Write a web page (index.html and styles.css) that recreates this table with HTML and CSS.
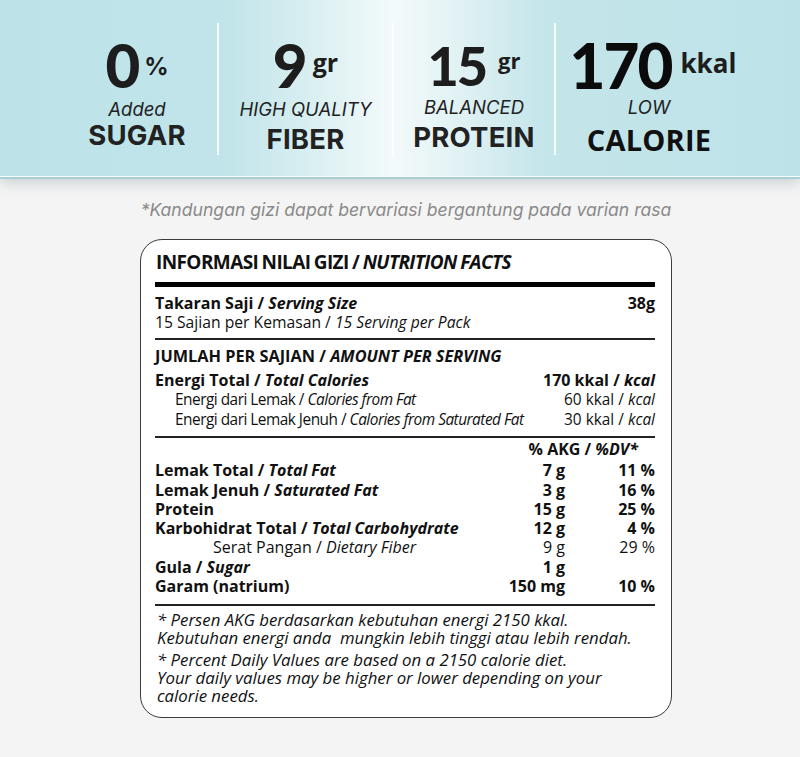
FILE: index.html
```html
<!DOCTYPE html>
<html lang="id">
<head>
<meta charset="utf-8">
<title>Nutrition Facts</title>
<link rel="stylesheet" href="styles.css">
</head>
<body>
<header class="stats">
  <div class="stat stat-1">
    <div class="stat-head"><span class="num">0</span><span class="unit unit-pct">%</span></div>
    <div class="stat-sub">Added</div>
    <div class="stat-main">SUGAR</div>
  </div>
  <div class="stat stat-2">
    <div class="stat-head"><span class="num">9</span><span class="unit">gr</span></div>
    <div class="stat-sub">HIGH QUALITY</div>
    <div class="stat-main">FIBER</div>
  </div>
  <div class="stat stat-3">
    <div class="stat-head"><span class="num">15</span><span class="unit">gr</span></div>
    <div class="stat-sub">BALANCED</div>
    <div class="stat-main">PROTEIN</div>
  </div>
  <div class="stat stat-4">
    <div class="stat-head"><span class="num">170</span><span class="unit unit-kkal">kkal</span></div>
    <div class="stat-sub">LOW</div>
    <div class="stat-main">CALORIE</div>
  </div>
</header>

<p class="note">*Kandungan gizi dapat bervariasi bergantung pada varian rasa</p>

<section class="card">
  <h1 class="title">INFORMASI NILAI GIZI / <i>NUTRITION FACTS</i></h1>
  <div class="rule-thick"></div>

  <div class="row bold"><span>Takaran Saji / <i>Serving Size</i></span><span>38g</span></div>
  <div class="row serv"><span>15 Sajian per Kemasan / <i>15 Serving per Pack</i></span></div>
  <div class="rule"></div>

  <div class="row bold section-head"><span>JUMLAH PER SAJIAN / <i>AMOUNT PER SERVING</i></span></div>
  <div class="row bold energy"><span>Energi Total / <i>Total Calories</i></span><span>170 kkal / <i>kcal</i></span></div>
  <div class="row sub"><span class="cond">Energi dari Lemak / <i>Calories from Fat</i></span><span>60 kkal / <i>kcal</i></span></div>
  <div class="row sub"><span class="cond">Energi dari Lemak Jenuh / <i>Calories from Saturated Fat</i></span><span>30 kkal / <i>kcal</i></span></div>
  <div class="rule"></div>

  <div class="nutrients">
    <div class="nrow bold akg"><span></span><span class="dv">% AKG / <i>%DV*</i></span></div>
    <div class="nrow bold"><span>Lemak Total / <i>Total Fat</i></span><span class="amt">7 g</span><span class="pct">11 %</span></div>
    <div class="nrow bold"><span>Lemak Jenuh / <i>Saturated Fat</i></span><span class="amt">3 g</span><span class="pct">16 %</span></div>
    <div class="nrow bold"><span>Protein</span><span class="amt">15 g</span><span class="pct">25 %</span></div>
    <div class="nrow bold"><span>Karbohidrat Total / <i>Total Carbohydrate</i></span><span class="amt">12 g</span><span class="pct">4 %</span></div>
    <div class="nrow fiber"><span>Serat Pangan / <i>Dietary Fiber</i></span><span class="amt">9 g</span><span class="pct">29 %</span></div>
    <div class="nrow bold"><span>Gula / <i>Sugar</i></span><span class="amt">1 g</span><span class="pct"></span></div>
    <div class="nrow bold"><span>Garam (natrium)</span><span class="amt">150 mg</span><span class="pct">10 %</span></div>
  </div>
  <div class="rule"></div>

  <div class="foot">
    <p>* Persen AKG berdasarkan kebutuhan energi 2150 kkal.<br>Kebutuhan energi anda&nbsp; mungkin lebih tinggi atau lebih rendah.</p>
    <p>* Percent Daily Values are based on a 2150 calorie diet.<br>Your daily values may be higher or lower depending on your<br>calorie needs.</p>
  </div>
</section>
</body>
</html>
```

FILE: styles.css
```css
html, body {
  margin: 0;
  padding: 0;
}
body {
  width: 800px;
  height: 757px;
  overflow: hidden;
  background: #f4f4f4;
  color: #111;
  font-family: "Open Sans", "Liberation Sans", sans-serif;
}

/* ---------- top banner ---------- */
.stats {
  position: relative;
  height: 177px;
  box-sizing: border-box;
  padding-left: 57px;
  display: grid;
  grid-template-columns: 160px 175px 162px 196px;
  background: linear-gradient(90deg, #bde3e8 0%, #c0e4e9 28%, #dcf0f2 40%, #f3fafb 49%, #e2f2f4 57%, #c4e5ea 68%, #bde3e8 100%);
  border-bottom: 1px solid #f6fbfc;
  box-shadow: 0 2px 0 #a9cfd4, 0 6px 12px rgba(120, 150, 155, 0.35);
  color: #1d1d1d;
}
.stat {
  margin-top: 23px;
  height: 132px;
  display: flex;
  flex-direction: column;
  align-items: center;
  font-family: Inter, "Open Sans", sans-serif;
}
.stat + .stat {
  border-left: 2px solid rgba(255, 255, 255, 0.85);
}
.stat-3 { border-left-color: rgba(255, 255, 255, 0.5); }

.stat-head {
  display: flex;
  align-items: flex-start;
  height: 70px;
  margin-top: 12px;
}
.num {
  font-family: Lato, "Open Sans", sans-serif;
  font-weight: 900;
  font-size: 60px;
  line-height: 60px;
  letter-spacing: -1px;
}
.unit {
  font-family: "Open Sans", sans-serif;
  font-weight: 700;
  font-size: 25px;
  line-height: 25px;
  margin-left: 6px;
  margin-top: 15px;
}
.unit-pct {
  font-family: Inter, sans-serif;
  font-size: 24px;
  margin-left: 5px;
  margin-top: 19px;
}
.stat-4 .num { font-size: 62px; color: #0b0b0b; letter-spacing: -2px; }
.unit-kkal { font-size: 26px; margin-top: 16px; margin-left: 9px; }
.stat-3 .num { font-size: 54px; line-height: 54px; margin-top: 4px; letter-spacing: -2px; }
.stat-3 .unit { font-size: 22px; margin-top: 13px; margin-left: 12px; }

.stat-sub {
  margin-top: -7px;
  font-style: italic;
  font-weight: 400;
  font-size: 18.5px;
  line-height: 22px;
  color: #222;
}
.stat-main {
  font-weight: 700;
  font-size: 27.5px;
  line-height: 30px;
  letter-spacing: 0.2px;
  color: #222;
}
.stat-2 .stat-main { margin-top: 4px; }
.stat-3 .stat-sub, .stat-4 .stat-sub { margin-top: -9px; }
.stat-3 .stat-main { margin-top: 4px; }
.stat-4 .stat-main {
  font-family: "Open Sans", sans-serif;
  font-size: 29px;
  margin-top: 7px;
  margin-left: -8px;
  color: #111;
}
.stat-4 .stat-sub { margin-left: -8px; }

/* ---------- note ---------- */
.note {
  margin: 22px 0 0;
  text-align: center;
  padding-left: 12px;
  font-family: Inter, "Open Sans", sans-serif;
  font-style: italic;
  font-size: 17.6px;
  line-height: 22px;
  color: #8a8a8a;
}

/* ---------- card ---------- */
.card {
  width: 532px;
  margin: 18px 0 0 140px;
  box-sizing: border-box;
  padding: 8px 16px 12px 14px;
  background: #fff;
  border: 1.5px solid #3c3c3c;
  border-radius: 22px;
  font-size: 16px;
}
.title {
  margin: 2px 0 0 1px;
  font-size: 19px;
  line-height: 24px;
  font-weight: 700;
  letter-spacing: -0.6px;
  word-spacing: -1px;
}
.rule-thick {
  height: 5px;
  background: #000;
  margin-top: 8px;
}
.rule {
  height: 2px;
  background: #222;
}
.row {
  display: flex;
  justify-content: space-between;
  line-height: 19px;
}
.serv { font-size: 15.7px; }
.bold { font-weight: 700; }
.rule-thick + .row { margin-top: 7px; }
.row + .rule { margin-top: 6px; }
.section-head { margin-top: 7px; font-size: 16.3px; }
.energy { margin-top: 5px; }
.sub {
  padding-left: 20px;
  font-size: 15.4px;
  line-height: 20px;
}
.cond { letter-spacing: -0.5px; }

.nutrients { padding: 2px 0 8px; }
.nrow {
  display: grid;
  grid-template-columns: 1fr 80px 90px;
  line-height: 19.3px;
}
.nrow .amt, .nrow .pct { text-align: right; }
.akg {
  grid-template-columns: 1fr 200px;
  margin-bottom: 2px;
}
.akg .dv { text-align: right; padding-right: 17px; }
.fiber { font-weight: 400; }
.fiber span:first-child { padding-left: 58px; }

.foot {
  font-style: italic;
  font-size: 16.8px;
  line-height: 18px;
  padding-left: 2px;
}
.foot p { margin: 5px 0 0; }
.foot p + p { margin-top: 4px; }
```
